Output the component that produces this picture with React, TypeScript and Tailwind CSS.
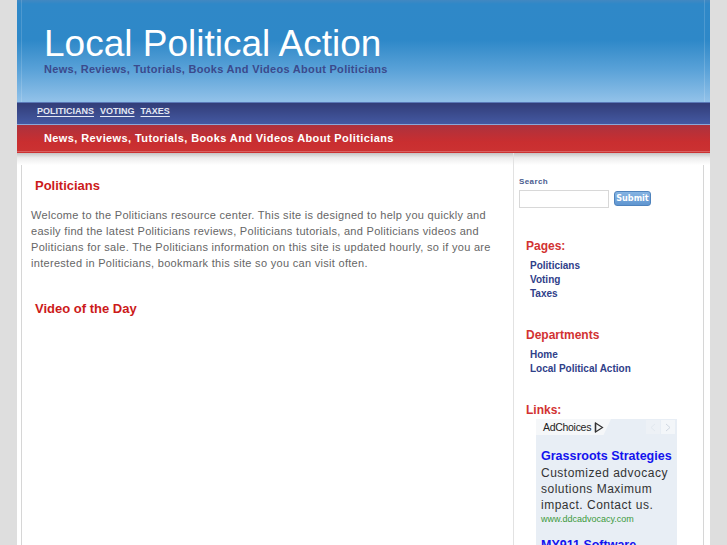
import React from "react";

const F = { fontFamily: '"Liberation Sans", Arial, sans-serif' };

export default function App() {
  return (
    <div className="min-h-screen bg-[#dedede]" style={F}>
      <div className="ml-[17px] w-[693px] bg-white">
        {/* Header */}
        <div className="relative h-[102px] bg-[linear-gradient(to_bottom,#4288c2_0px,#2f88c8_4px,#2e88c8_40px,#5aa2d8_70px,#8fc0e8_100px)] pl-[27px] pt-[27px]">
          <div className="text-[37px] leading-[34px] text-white">Local Political Action</div>
          <div className="mt-[3px] text-[11px] leading-[11px] font-bold text-[#3b4a8c] tracking-[0.3px]">
            News, Reviews, Tutorials, Books And Videos About Politicians
          </div>
          <div className="absolute left-[4px] top-0 bottom-0 w-px bg-[#ffffff]/15" />
          <div className="absolute right-[5px] top-0 bottom-0 w-px bg-[#ffffff]/15" />
        </div>
        {/* Nav */}
        <div className="relative h-[22px] border-t border-[#5a78b8] bg-[linear-gradient(to_bottom,#323d78,#4459a2)] pl-[20px] flex items-center gap-[6px]">
          {["POLITICIANS", "VOTING", "TAXES"].map((t) => (
            <span key={t} className="text-[9px] leading-[9px] font-bold text-[#e4e8f4] underline underline-offset-[2px] mt-[-5px]">
              {t}
            </span>
          ))}
        </div>
        {/* Red bar */}
        <div className="relative h-[29px] border-t border-[#8aa8d8] bg-[linear-gradient(to_bottom,#ac323e,#c92e30_60%,#cc3232)] pl-[27px] flex items-center">
          <span className="text-[11px] font-bold text-white tracking-[0.4px] mt-[-2px]">
            News, Reviews, Tutorials, Books And Videos About Politicians
          </span>
          <div className="absolute left-0 right-0 bottom-[1px] h-px bg-[#e08080]/60" />
        </div>
        {/* Body */}
        <div className="relative">
          <div className="absolute left-0 right-0 top-0 h-[12px] bg-[linear-gradient(to_bottom,#c4c4c4,#ececec_40%,#ffffff)]" />
          <div className="ml-[4px] mr-[6px] flex border-l border-r border-[#d6d6d6] min-h-[392px]">
            {/* Main */}
            <div className="w-[492px] border-r border-[#e2e2e2] pl-[9px] pr-[16px] pt-[25px] relative">
              <h2 className="pl-[4px] text-[13px] leading-[16px] font-bold text-[#cc1a1a]">Politicians</h2>
              <p className="mt-[13px] text-[11px] leading-[16px] text-[#666] tracking-[0.3px]">
                Welcome to the Politicians resource center. This site is designed to help you quickly and easily find the latest Politicians reviews, Politicians tutorials, and Politicians videos and Politicians for sale. The Politicians information on this site is updated hourly, so if you are interested in Politicians, bookmark this site so you can visit often.
              </p>
              <h2 className="mt-[30px] pl-[4px] text-[13px] leading-[16px] font-bold text-[#cc1a1a]">Video of the Day</h2>
            </div>
            {/* Sidebar */}
            <div className="flex-1 relative pl-[5px] pt-[25px]">
              <div className="text-[8px] leading-[8px] font-bold text-[#4a5b8f] tracking-[0.4px]">Search</div>
              <div className="mt-[4px] flex items-center">
                <div className="w-[90px] h-[18px] border border-[#d8d8d8] bg-white" />
                <div className="ml-[5px] mt-[-1px] h-[15px] w-[37px] rounded-[3px] border border-[#4f83bd] bg-[linear-gradient(to_bottom,#86b4e2,#5f95d0)] flex items-center justify-center">
                  <span className="text-[9px] leading-[9px] font-bold text-white" style={{ fontFamily: '"DejaVu Sans Condensed", "DejaVu Sans", sans-serif' }}>Submit</span>
                </div>
              </div>

              <div className="mt-[31px] pl-[7px] text-[12px] leading-[14px] font-bold text-[#d23232]">Pages:</div>
              <div className="mt-[6px] pl-[11px] flex flex-col text-[10px] leading-[14px] font-bold text-[#2f4089]">
                <span>Politicians</span>
                <span>Voting</span>
                <span>Taxes</span>
              </div>

              <div className="mt-[27px] pl-[7px] text-[12px] leading-[14px] font-bold text-[#d23232]">Departments</div>
              <div className="mt-[6px] pl-[11px] flex flex-col text-[10px] leading-[14px] font-bold text-[#2f4089]">
                <span>Home</span>
                <span>Local Political Action</span>
              </div>

              <div className="mt-[27px] pl-[7px] text-[12px] leading-[14px] font-bold text-[#d23232]">Links:</div>
              <div className="ml-[17px] mt-[2px] w-[141px] h-[126px] bg-[#e8eef5] overflow-hidden relative">
                <div className="flex items-start justify-between">
                  <div className="h-[16px] w-[75px] bg-[#f5f7f9] flex items-center pl-[7px] [clip-path:polygon(0_0,100%_0,90%_100%,0_100%)]">
                    <span className="text-[10.5px] leading-[11px] text-[#222] tracking-[-0.3px]">AdChoices</span>
                    <svg width="10" height="11" viewBox="0 0 10 11" className="ml-[3px]">
                      <path d="M1.5 1 L8.5 5.5 L1.5 10 Z" fill="none" stroke="#333" strokeWidth="1.2" />
                      <path d="M1.5 1 V10" stroke="#333" strokeWidth="1.4" />
                    </svg>
                  </div>
                  <div className="flex gap-[1px] mt-[1px] mr-[2px]">
                    <div className="w-[14px] h-[14px] bg-[#edf1f6] flex items-center justify-center">
                      <svg width="6" height="9" viewBox="0 0 6 9"><path d="M5 1 L1 4.5 L5 8" fill="none" stroke="#e2e8ef" strokeWidth="1" /></svg>
                    </div>
                    <div className="w-[14px] h-[14px] bg-[#f3f6f9] flex items-center justify-center">
                      <svg width="6" height="9" viewBox="0 0 6 9"><path d="M1 1 L5 4.5 L1 8" fill="none" stroke="#d0d8e2" strokeWidth="1" /></svg>
                    </div>
                  </div>
                </div>
                <div className="pl-[5px] pt-[13px]">
                  <div className="text-[12.5px] leading-[16px] font-bold text-[#1414ee] whitespace-nowrap">Grassroots Strategies</div>
                  <div className="mt-[1px] w-[128px] text-[12px] leading-[16px] text-[#333] tracking-[0.5px]">
                    Customized advocacy solutions Maximum impact. Contact us.
                  </div>
                  <div className="text-[9px] leading-[12px] text-[#3c9a3c]">www.ddcadvocacy.com</div>
                  <div className="mt-[12px] text-[12.5px] leading-[16px] font-bold text-[#1414ee] whitespace-nowrap">MY911 Software</div>
                </div>
              </div>
            </div>
          </div>
        </div>
      </div>
    </div>
  );
}
